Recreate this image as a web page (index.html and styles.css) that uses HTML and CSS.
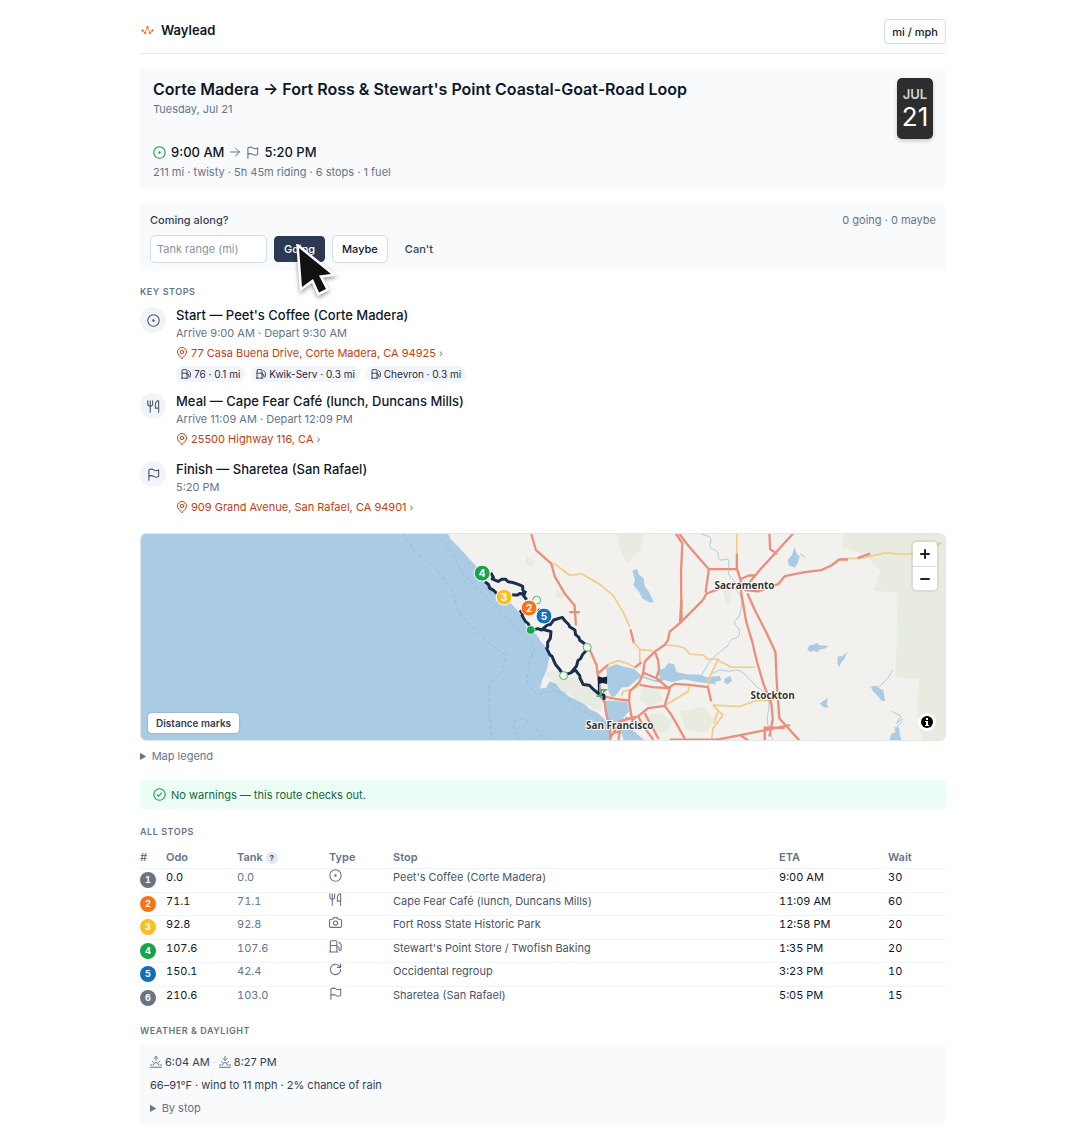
FILE: index.html
```html
<!DOCTYPE html>
<html lang="en">
<head>
<meta charset="utf-8">
<meta name="viewport" content="width=device-width, initial-scale=1">
<title>Waylead</title>
<link rel="stylesheet" href="styles.css">
</head>
<body>
<svg class="sprite" aria-hidden="true">
  <symbol id="i-start" viewBox="0 0 24 24"><circle cx="12" cy="12" r="10.5"/><circle cx="12" cy="12" r="1.2" fill="currentColor"/></symbol>
  <symbol id="i-flag" viewBox="0 0 24 24"><path d="M3.5 22.5V3.5c3-2 6-2 9 0s6 2 9 0v12c-3 2-6 2-9 0s-6-2-9 0"/></symbol>
  <symbol id="i-meal" viewBox="0 0 24 24"><path d="M1.500 1.500v6c0 2.500 2 4 4.500 4s4.500-1.500 4.500-4v-6M6 1.500v21M21.500 15h-6V9c0-4.500 2-7.500 6-7.500v21"/></symbol>
  <symbol id="i-pin" viewBox="0 0 24 24"><path d="M12 23c-4.500-4-9-8.500-9-13a9 9 0 0 1 18 0c0 4.500-4.500 9-9 13z"/><circle cx="12" cy="10" r="3.500"/></symbol>
  <symbol id="i-fuel" viewBox="0 0 24 24"><path d="M2.500 22V3.500a2 2 0 0 1 2-2h8a2 2 0 0 1 2 2V22M.5 22h16M2.500 10h12M14.500 12.500h2a2 2 0 0 1 2 2v3a2 2 0 0 0 4 0V8.500L18.500 4"/></symbol>
  <symbol id="i-camera" viewBox="0 0 24 24"><path d="M3 6h4l2-3h6l2 3h4a2 2 0 0 1 2 2v11a2 2 0 0 1-2 2H3a2 2 0 0 1-2-2V8a2 2 0 0 1 2-2z"/><circle cx="12" cy="13" r="3.800"/></symbol>
  <symbol id="i-loop" viewBox="0 0 24 24"><path d="M21.500 12A9.500 9.500 0 1 1 18.500 5l3 3M21.500 2v6h-6"/></symbol>
  <symbol id="i-check" viewBox="0 0 24 24"><circle cx="12" cy="12" r="10.500"/><path d="M7.500 12.500l3 2.500 5.500-6"/></symbol>
  <symbol id="i-arrow" viewBox="0 0 24 24"><path d="M3 12h18M13 4l8 8-8 8"/></symbol>
  <symbol id="i-sunrise" viewBox="0 0 24 24"><path d="M12 9V1M8 5l4-4 4 4M1 22.500h22M1 18h3M20 18h3M4.500 10.500l2 2M19.500 10.500l-2 2M7 18a5 5 0 0 1 10 0"/></symbol>
  <symbol id="i-sunset" viewBox="0 0 24 24"><path d="M12 1v8M8 5l4 4 4-4M1 22.500h22M1 18h3M20 18h3M4.500 10.500l2 2M19.500 10.500l-2 2M7 18a5 5 0 0 1 10 0"/></symbol>
</svg>

<div class="page">
  <header class="topbar">
    <a class="brand" href="#">
      <svg class="logo" viewBox="0 0 30 24" aria-hidden="true"><path d="M3 13l6 6 6-14 6 14 6-6"/><circle cx="3" cy="13" r="2"/><circle cx="27" cy="13" r="2"/><circle cx="15" cy="5" r="2"/><circle cx="9" cy="19" r="2"/><circle cx="21" cy="19" r="2"/></svg>
      Waylead</a>
    <button class="btn units" type="button">mi / mph</button>
  </header>

  <main>
    <section class="card trip">
      <div>
        <h1>Corte Madera → Fort Ross &amp; Stewart's Point Coastal-Goat-Road Loop</h1>
        <p class="muted">Tuesday, Jul 21</p>
        <p class="times"><svg class="icon green"><use href="#i-start"/></svg>9:00 AM<svg class="icon small"><use href="#i-arrow"/></svg><svg class="icon"><use href="#i-flag"/></svg>5:20 PM</p>
        <p class="muted">211 mi · twisty · 5h 45m riding · 6 stops · 1 fuel</p>
      </div>
      <time class="date" datetime="07-21"><span class="month">JUL</span><span class="day">21</span></time>
    </section>

    <section class="card rsvp">
      <div class="rsvp-head"><label for="tank">Coming along?</label><span class="muted">0 going · 0 maybe</span></div>
      <div class="rsvp-form">
        <input id="tank" type="text" placeholder="Tank range (mi)">
        <button class="btn primary" type="button">Going<svg class="cursor" viewBox="-3 -4 42 54" aria-hidden="true"><path d="M0 0L32 26 20 27.500 27 41 20 44.500 14 31 3 39Z"/></svg></button>
        <button class="btn large" type="button">Maybe</button>
        <button class="btn ghost" type="button">Can't</button>
      </div>
    </section>

    <section class="key-stops">
      <h2>Key stops</h2>
      <ol class="stops">
        <li>
          <span class="bubble"><svg class="icon"><use href="#i-start"/></svg></span>
          <div>
            <h3>Start — Peet's Coffee (Corte Madera)</h3>
            <p class="muted">Arrive 9:00 AM · Depart 9:30 AM</p>
            <a class="address" href="#"><svg class="icon small"><use href="#i-pin"/></svg>77 Casa Buena Drive, Corte Madera, CA 94925<span class="chev">›</span></a>
            <ul class="chips">
              <li><svg class="icon tiny"><use href="#i-fuel"/></svg>76 · 0.1 mi</li>
              <li><svg class="icon tiny"><use href="#i-fuel"/></svg>Kwik-Serv · 0.3 mi</li>
              <li><svg class="icon tiny"><use href="#i-fuel"/></svg>Chevron · 0.3 mi</li>
            </ul>
          </div>
        </li>
        <li>
          <span class="bubble"><svg class="icon"><use href="#i-meal"/></svg></span>
          <div>
            <h3>Meal — Cape Fear Café (lunch, Duncans Mills)</h3>
            <p class="muted">Arrive 11:09 AM · Depart 12:09 PM</p>
            <a class="address" href="#"><svg class="icon small"><use href="#i-pin"/></svg>25500 Highway 116, CA<span class="chev">›</span></a>
          </div>
        </li>
        <li>
          <span class="bubble"><svg class="icon"><use href="#i-flag"/></svg></span>
          <div>
            <h3>Finish — Sharetea (San Rafael)</h3>
            <p class="muted">5:20 PM</p>
            <a class="address" href="#"><svg class="icon small"><use href="#i-pin"/></svg>909 Grand Avenue, San Rafael, CA 94901<span class="chev">›</span></a>
          </div>
        </li>
      </ol>
    </section>

    <section class="map" aria-label="Route map">
      <svg class="map-art" viewBox="0 0 806 208" preserveAspectRatio="xMidYMid slice">
        <g transform="scale(.33333) translate(720 -9)">
          <!-- parks and hills -->
          <g class="park">
            <path d="M712 9h80l-10 50-40 40-22-40z"/>
            <path d="M440 80l25 12-8 20-22-10zM530 180l25 10-10 18-20-8z"/>
            <path d="M790 470l50 10 10 30-40 20-30-20zM790 560l50-15 40 30-20 35-50-8z"/>
            <path d="M900 545l70-15 35 40-25 40-60-10z"/>
            <path d="M1390 9h310v623h-70l-15-75 5-110-70-5 4-255-70-5 20-60-50-50-65-20z"/>
            <path d="M1030 180l20-5 5 40-15 10z"/>
          </g>
          <!-- ocean and bays -->
          <g class="water">
            <path d="M-730 0H198L212 28l23 22 27 30 24 26 12 28 32 30 20 26 32 18 20 22 24 26 14 38 28 18 14 22 18 20 8 22-4 28-6 22-10 20-8 30 18-2 12-20 20 8 22 22 14 16 24 10 22 12 18 16 22 10 22 20 6 12 8 22 4 45H-730z"/>
            <path d="M750 120l8 30-6 12 18 22 10 20 24 12 10-2-14-30-14-20-2-22-14-10-6-18z" transform="translate(8 2)"/>
            <path d="M1245 50l-6 22-14 18 4 16 18 6 8-14 6-20-8-6z"/>
            <path d="M1290 346l14-2 8-6 8 8 28 2-12 8-12 2-10 8-12-4-10 4-8-8z"/>
            <path d="M1376 380l14-2 14-12-8 20-10 12-6 14-6-12z"/>
            <path d="M1322 520l24-16-4 16 6 14-16-2z"/>
            <path d="M1474 470l20-2 10 10 8 2 6 34-12-2-10-14-14-12z"/>
            <path d="M1548 590l12 4 2 20 6 18h-36l4-20 12-4z"/>
            <path d="M1036 446l16-8 6 14-14 12-10-8z"/>
          </g>
          <g class="park"><path d="M500 425l44-2 26 18 26 2 22 24 38 24 12 30-6 24-20-8-22-16-24-6-28-22-24-10-22-30-24-14z"/></g>
          <g class="river">
            <path d="M960 9c18 10 40 4 32 30s26 10 24 38 36-4 32 20 10 10 0 26 30 30 22 46 20 14 16 60c-2 20-6 30-18 42s16 20 12 40-26 10-30 26-26 20-60 58l-30 50"/>
            <path d="M1000 430c30-20 40 0 60-8s40 14 60 36 30 20 44 40-4 60 0 80 8 20 16 54"/>
            <path d="M1500 470l26-24 14-26M1262 70l16 12M1538 545l28 14-14 22 20-14M1545 600l24-24"/>
          </g>
          <g class="sealine">
            <path d="M66 9l40 58 60 46 50 70 20 66 50 50 50 48 42 30-10 46-40 38-2 76 10 95"/>
            <path d="M166 9l50 60 30 60 60 60 60 60 60 64 38 40-18 50-6 56 30 36 60-16 70 60 60 30 80 52"/>
            <path d="M420 632c-30-40-22-66 0-66s40 22 76 64"/>
          </g>
          <!-- highways -->
          <g class="road minor">
            <path d="M520 98l50 38 34-6 52 30 44 36 30 50 20 44"/>
            <path d="M1072 9v60M1016 392l40 20h72M1385 86l60-2 74-16 60 4 60-6 50-30M1000 526l80 4 50-18h50M1000 526l30 30-30 40-4 36"/>
          </g>
          <g class="road">
            <path d="M454 12l14 48 46 40 10 38 30 52 30 36 4 60M568 246h32M622 350l8 10"/>
            <path d="M888 9l20 30-4 90 2 146"/>
            <path d="M898 9l30 40 60 68h84l14 40M988 117l-10 70M970 210l10-19 50-20 56-14M1072 70v44l14 44 20 4 36-44 48-52 60-66M1170 9l2 48 22 14M1086 146l22-10h22M1096 180l40 4 60-22 20-24 60-12 50-6 30-14 24-18h26M1435 84l38-14"/>
            <path d="M1084 180l16 94 18 60 14 60 20 68 24 60 4 46-10 52M1104 190l22 50 34 66 28 60 4 90 8 110 60 66M1002 632l80-16 90-18 60-12M1082 616l24 16M1156 602v40M1152 594h64"/>
          </g>
          <!-- bay area -->
          <g transform="translate(630 210)">
            <g class="water">
              <path d="M50 205l30-12 26 8 28 6 22 22-14 10-26 22-20 2-20 26-12 2-10-22z"/>
              <path d="M42 302l70 4 6 28-18 20 18 28 46 40h-62l-12-34-20-10-20-14-6-34z"/>
              <path d="M155 226l40 14 16-6-6-22 20-8 10-14 18 2 8 24 34 8 34 0 22 8 40-4 4 14-20 4 4 8-26-4-30-4-40-8-36 8-24-6-20 8-42-14z"/>
            </g>
            <g class="road minor">
              <path d="M132 128l18 20v40M150 148l38 4M50 195l35-13 26 8 24 13M225 135l40 3 20 7 15 17 40 3 15 13h35M225 318l45-28 25-15 4-15M385 180l-24 50-6 30M385 335l-12 36M95 290l5-15 30-8 20-12"/>
            </g>
            <g class="road">
              <path d="M122 88l10 40M275 0l-4 70M340 0l-70 70-30 25-5 25-10 15-30 20-30 30-5 35-10 25-30 30-2 30 7 45 12 8"/>
              <path d="M135 203l20-16M195 155l10 25 3 30-8 25M160 218l40 17 40 33-15 50M150 255l40 7 45 3 20-13 45 3 55 7 10 43"/>
              <path d="M225 318l-50 7-30 25-55 15-20 35-10 17M225 318l20 27 20 35 22 40M45 290l35 8 38 4M0 150l20 45 5 40 10 55 10 20 5 35 10 40 2 35M25 220l30-25M70 400l20-5-4 25M145 350l20 35 26 35M165 340l42 78M130 356l-8 30M130 356h-24M-2 0M240 420h150"/>
            </g>
          </g>
          <!-- planned route -->
          <path class="route" transform="translate(270 90)" d="M62 38l8 14-4 4 18 8 12-7 10 0 8 8 14 2 12 4 10 4 8 4 0 10 4 6-3 10 11 14M45 65l10 8 4 12 12 6 12 12M125 105l18 0 6-5 14 2 4-10M150 150l8 12-2 4 10 18 8 6 6 12M183 212l20-6 12 4 18-16 8 0 10-14 26-8 8 10 12 12 2 6 16 10 2 14 10 8 2 8 16 12M350 270l-12 14-6 12-8 6-4 16-10 12-6 8-18 6M215 207l28 8-2 20-8 12 0 14-3 4 10 20 6 4 10 24 12 14 8 12M300 340l16-10 14 18 0 6 10 20 18 2 10 10 16 14 18 6 1 14M204 148l10 8"/>
          <g class="waypoint">
            <circle cx="470" cy="210" r="12"/><circle cx="622" cy="352" r="12"/><circle cx="551" cy="437" r="12"/>
            <circle class="solid" cx="452" cy="300" r="13"/>
          </g>
          <path class="finish-flag" d="M654 440h4l10 3 14-3v22l-14-3-10 3v36h-4z"/>
          <path class="start-flag" d="M650 500l14-6v-14l14 0-8 8M662 480v26"/>
        </g>
        <g class="city"><text x="575" y="56">Sacramento</text><text x="611" y="166">Stockton</text><text x="446" y="196">San Francisco</text></g>
        <g class="pin">
          <circle cx="342" cy="40" r="8" fill="#16a34a"/><text x="342" y="44">4</text>
          <circle cx="364" cy="64" r="8" fill="#fbbf24"/><text x="364" y="68">3</text>
          <circle cx="389" cy="75" r="8" fill="#f97316"/><text x="389" y="79">2</text>
          <circle cx="404" cy="83" r="8" fill="#1670b8"/><text x="404" y="87">5</text>
        </g>
      </svg>
      <div class="zoom"><button type="button" aria-label="Zoom in"><svg viewBox="0 0 12 12"><path d="M2 6h8M6 2v8"/></svg></button><button type="button" aria-label="Zoom out"><svg viewBox="0 0 12 12"><path d="M2 6h8"/></svg></button></div>
      <button class="marks" type="button">Distance marks</button>
      <button class="info" type="button" aria-label="Map attribution"><svg viewBox="0 0 12 12"><circle cx="6" cy="6" r="6"/><path d="M5 2h2v2H5zM4 5h3v4h1v1H4V9h1V6H4z"/></svg></button>
    </section>
    <details class="legend"><summary>Map legend</summary></details>

    <p class="notice"><svg class="icon"><use href="#i-check"/></svg>No warnings — this route checks out.</p>

    <section class="all-stops">
      <h2>All stops</h2>
      <table>
        <colgroup><col class="c-num"><col class="c-odo"><col class="c-tank"><col class="c-type"><col><col class="c-eta"><col class="c-wait"></colgroup>
        <thead><tr><th>#</th><th>Odo</th><th>Tank <button class="help" type="button" aria-label="About tank distance">?</button></th><th>Type</th><th>Stop</th><th>ETA</th><th>Wait</th></tr></thead>
        <tbody>
          <tr><td><span class="num">1</span></td><td>0.0</td><td class="dim">0.0</td><td><svg class="icon"><use href="#i-start"/></svg></td><td class="name">Peet's Coffee (Corte Madera)</td><td>9:00 AM</td><td>30</td></tr>
          <tr><td><span class="num orange">2</span></td><td>71.1</td><td class="dim">71.1</td><td><svg class="icon"><use href="#i-meal"/></svg></td><td class="name">Cape Fear Café (lunch, Duncans Mills)</td><td>11:09 AM</td><td>60</td></tr>
          <tr><td><span class="num yellow">3</span></td><td>92.8</td><td class="dim">92.8</td><td><svg class="icon"><use href="#i-camera"/></svg></td><td class="name">Fort Ross State Historic Park</td><td>12:58 PM</td><td>20</td></tr>
          <tr><td><span class="num green-bg">4</span></td><td>107.6</td><td class="dim">107.6</td><td><svg class="icon"><use href="#i-fuel"/></svg></td><td class="name">Stewart's Point Store / Twofish Baking</td><td>1:35 PM</td><td>20</td></tr>
          <tr><td><span class="num blue">5</span></td><td>150.1</td><td class="dim">42.4</td><td><svg class="icon"><use href="#i-loop"/></svg></td><td class="name">Occidental regroup</td><td>3:23 PM</td><td>10</td></tr>
          <tr><td><span class="num">6</span></td><td>210.6</td><td class="dim">103.0</td><td><svg class="icon"><use href="#i-flag"/></svg></td><td class="name">Sharetea (San Rafael)</td><td>5:05 PM</td><td>15</td></tr>
        </tbody>
      </table>
    </section>

    <section class="weather">
      <h2>Weather &amp; daylight</h2>
      <div class="card forecast">
        <p class="sun"><svg class="icon small"><use href="#i-sunrise"/></svg>6:04 AM<span class="sep">·</span><svg class="icon small"><use href="#i-sunset"/></svg>8:27 PM</p>
        <p>66–91°F · wind to 11 mph · 2% chance of rain</p>
        <details><summary>By stop</summary></details>
      </div>
    </section>
  </main>
</div>
</body>
</html>
```
FILE: styles.css
```css
* { box-sizing: border-box; }
body { margin: 0; background: #fff; color: #0f172a; font: 400 11px/18px Inter, "Liberation Sans", sans-serif; }
h1, h2, h3, p, ol, ul { margin: 0; padding: 0; }
ol, ul { list-style: none; }
button, input { font: inherit; color: inherit; }
.sprite { position: absolute; width: 0; height: 0; }
.page { max-width: 838px; margin: 0 auto; padding: 19px 16px 5px; }
.icon { width: 13px; height: 13px; flex: none; fill: none; stroke: currentColor; stroke-width: 2; stroke-linecap: round; stroke-linejoin: round; }
.icon.small { width: 12px; height: 12px; }
.icon.tiny { width: 10px; height: 10px; }
.muted { color: #64748b; }

.topbar { display: flex; justify-content: space-between; align-items: flex-start; padding-bottom: 9px; border-bottom: 1px solid #e8ecf1; margin-bottom: 14px; }
.brand { display: flex; align-items: center; gap: 7px; color: inherit; font-size: 13px; line-height: 22px; font-weight: 600; text-decoration: none; }
.logo { width: 13px; height: 10px; fill: #f97352; stroke: #f97316; stroke-width: 2; margin-left: 1px; }
.logo path { fill: none; }
.btn { height: 26px; padding: 0 9px; border: 1px solid #d5dce5; border-radius: 4px; background: #fff; font-weight: 500; line-height: 18px; }
.units { height: 25px; padding: 0 7px; }

.card { background: #f8fafc; border-radius: 4px; }
.trip { display: flex; justify-content: space-between; align-items: flex-start; padding: 10px 13px 8px; margin-bottom: 14px; }
h1 { font-size: 16px; line-height: 22px; font-weight: 600; }
.times { display: flex; align-items: center; gap: 5px; margin: 24px 0 1px; font-size: 13px; line-height: 20px; font-weight: 500; }
.times .icon { color: #64748b; }
.times .green { color: #16a34a; }
.date { display: flex; flex-direction: column; align-items: center; width: 36px; height: 61px; padding-top: 7px; border-radius: 5px; background: #2d2d2d; color: #fff; box-shadow: 0 2px 4px #0003; }
.month { font-size: 13px; line-height: 18px; font-weight: 600; color: #d4d4d4; }
.day { font-size: 26px; line-height: 28px; }

.rsvp { padding: 8px 10px; margin-bottom: 14px; }
.rsvp-head { display: flex; justify-content: space-between; margin-bottom: 6px; }
.rsvp-head label { font-weight: 500; color: #334155; }
.rsvp-head .muted { font-size: 11px; }
.rsvp-form { display: flex; align-items: center; gap: 7px; }
.rsvp-form input { width: 117px; height: 28px; padding: 0 6px; border: 1px solid #d5dce5; border-radius: 5px; background: #fff; }
.rsvp-form input::placeholder { color: #8a94a3; }
.large { height: 28px; border-radius: 5px; }
.primary { position: relative; border-color: #2b3a52; background: #2b3a52; color: #fff; }
.ghost { border-color: transparent; background: none; color: #334155; }
.cursor { position: absolute; left: 21px; top: 7px; width: 42px; height: 54px; fill: #111; stroke: #fff; stroke-width: 5; paint-order: stroke; filter: drop-shadow(0 2px 2px #0006); z-index: 2; pointer-events: none; }

h2 { font-size: 9px; line-height: 14px; font-weight: 600; letter-spacing: 0.06em; text-transform: uppercase; color: #64748b; }
.stops { display: grid; gap: 10px; margin-top: 6px; }
.stops > li { display: flex; gap: 10px; }
.stops > li:first-child { margin-bottom: -1px; }
.bubble { display: grid; place-items: center; flex: none; width: 26px; height: 26px; margin-top: 2px; border-radius: 50%; background: #f1f5f9; color: #475569; }
h3 { font-size: 13px; line-height: 20px; font-weight: 500; }
.stops .muted { line-height: 16px; }
.address { display: flex; align-items: center; gap: 3px; margin-top: 2px; line-height: 20px; color: #c2410c; text-decoration: none; }
.chev { font-size: 10px; color: #64748b; }
.chips { display: flex; gap: 6px; margin-top: 3px; }
.chips li { display: flex; align-items: center; gap: 3px; height: 16px; padding: 0 5px; border-radius: 8px; background: #f1f5f9; color: #1e293b; font-size: 10px; }

.map { position: relative; margin-top: 16px; height: 208px; border: 1px solid #dfe5ea; border-radius: 6px; overflow: hidden; background: #f2f1ed; }
.map-art { display: block; width: 100%; height: 100%; }
.park { fill: #e8ece0; }
.water { fill: #a9cbe4; }
.river { fill: none; stroke: #a9cbe4; stroke-width: 3; }
.sealine { fill: none; stroke: #9fafbe; stroke-width: 2; stroke-dasharray: 12 8; }
.road { fill: none; stroke: #e98f7c; stroke-width: 7; stroke-linejoin: round; }
.road.minor { stroke: #f3cb82; stroke-width: 5; }
.route { fill: none; stroke: #1a2e4f; stroke-width: 9; stroke-linejoin: round; }
.waypoint { fill: #eef7ee; stroke: #55aa78; stroke-width: 3; }
.waypoint .solid { fill: #16a34a; stroke: #c9ecd5; }
.finish-flag { fill: #14213d; }
.start-flag { fill: none; stroke: #55aa78; stroke-width: 5; }
.city { font: 700 10px "Open Sans", "Noto Sans", sans-serif; fill: #333; stroke: #fff; stroke-width: 2; paint-order: stroke; }
.pin { font-size: 10px; font-weight: 700; text-anchor: middle; fill: #fff; }
.pin circle { stroke: #fff; stroke-width: 1; }
.zoom { position: absolute; top: 8px; right: 8px; display: grid; width: 24px; border-radius: 4px; background: #fff; box-shadow: 0 0 0 2px #0001; }
.zoom button { display: grid; place-items: center; height: 24px; padding: 0; border: 0; background: none; }
.zoom button + button { border-top: 1px solid #ddd; }
.zoom svg { width: 12px; height: 12px; stroke: #222; stroke-width: 2; stroke-linecap: round; }
.marks { position: absolute; left: 7px; bottom: 7px; height: 20px; padding: 0 8px; border: 0; border-radius: 4px; background: #fff; box-shadow: 0 0 2px #0004; font-size: 10px; font-weight: 600; color: #334155; }
.info { position: absolute; right: 9px; bottom: 9px; display: grid; place-items: center; width: 18px; height: 18px; padding: 0; border: 0; border-radius: 50%; background: #fff; }
.info svg { width: 12px; height: 12px; }
.info path { fill: #fff; }
summary { color: #64748b; }
.legend { margin: 6px 0 15px; }
.notice { display: flex; align-items: center; gap: 5px; height: 29px; padding: 0 13px; border-radius: 4px; background: #ecfdf5; color: #166544; }
.notice .icon { color: #16a34a; }

.all-stops { margin-top: 16px; }
table { width: 100%; margin-top: 8px; table-layout: fixed; border-collapse: collapse; font-variant-numeric: tabular-nums; }
th, td { padding: 0; text-align: left; vertical-align: top; white-space: nowrap; }
th { height: 21px; line-height: 20px; font-weight: 600; color: #64748b; }
td { height: 24px; border-top: 1px solid #f1f4f8; line-height: 17px; }
tr:nth-child(even) td { height: 23px; }
td .icon { display: block; color: #64748b; }
.c-num { width: 26px; }
.c-odo { width: 71px; }
.c-tank { width: 92px; }
.c-type { width: 64px; }
.c-eta { width: 109px; }
.c-wait { width: 58px; }
td.dim { color: #64748b; }
td.name { color: #475569; }
.num { display: grid; place-items: center; width: 16px; height: 16px; margin-top: 3px; border-radius: 50%; background: #6b7280; color: #fff; font-size: 9px; line-height: 16px; font-weight: 700; }
.orange { background: #f97316; }
.yellow { background: #fbbf24; }
.green-bg { background: #16a34a; }
.blue { background: #0f70b7; }
.help { width: 12px; height: 12px; padding: 0; border: 0; border-radius: 50%; background: #e2e8f0; color: #475569; font-size: 8px; line-height: 12px; font-weight: 700; }

.weather { margin-top: 15px; }
.forecast { display: grid; gap: 5px; margin-top: 6px; padding: 9px 10px 8px; color: #334155; }
.sun { display: flex; align-items: center; gap: 3px; }
.sun .icon { color: #64748b; }
.sep { color: #cbd5e1; }
```
